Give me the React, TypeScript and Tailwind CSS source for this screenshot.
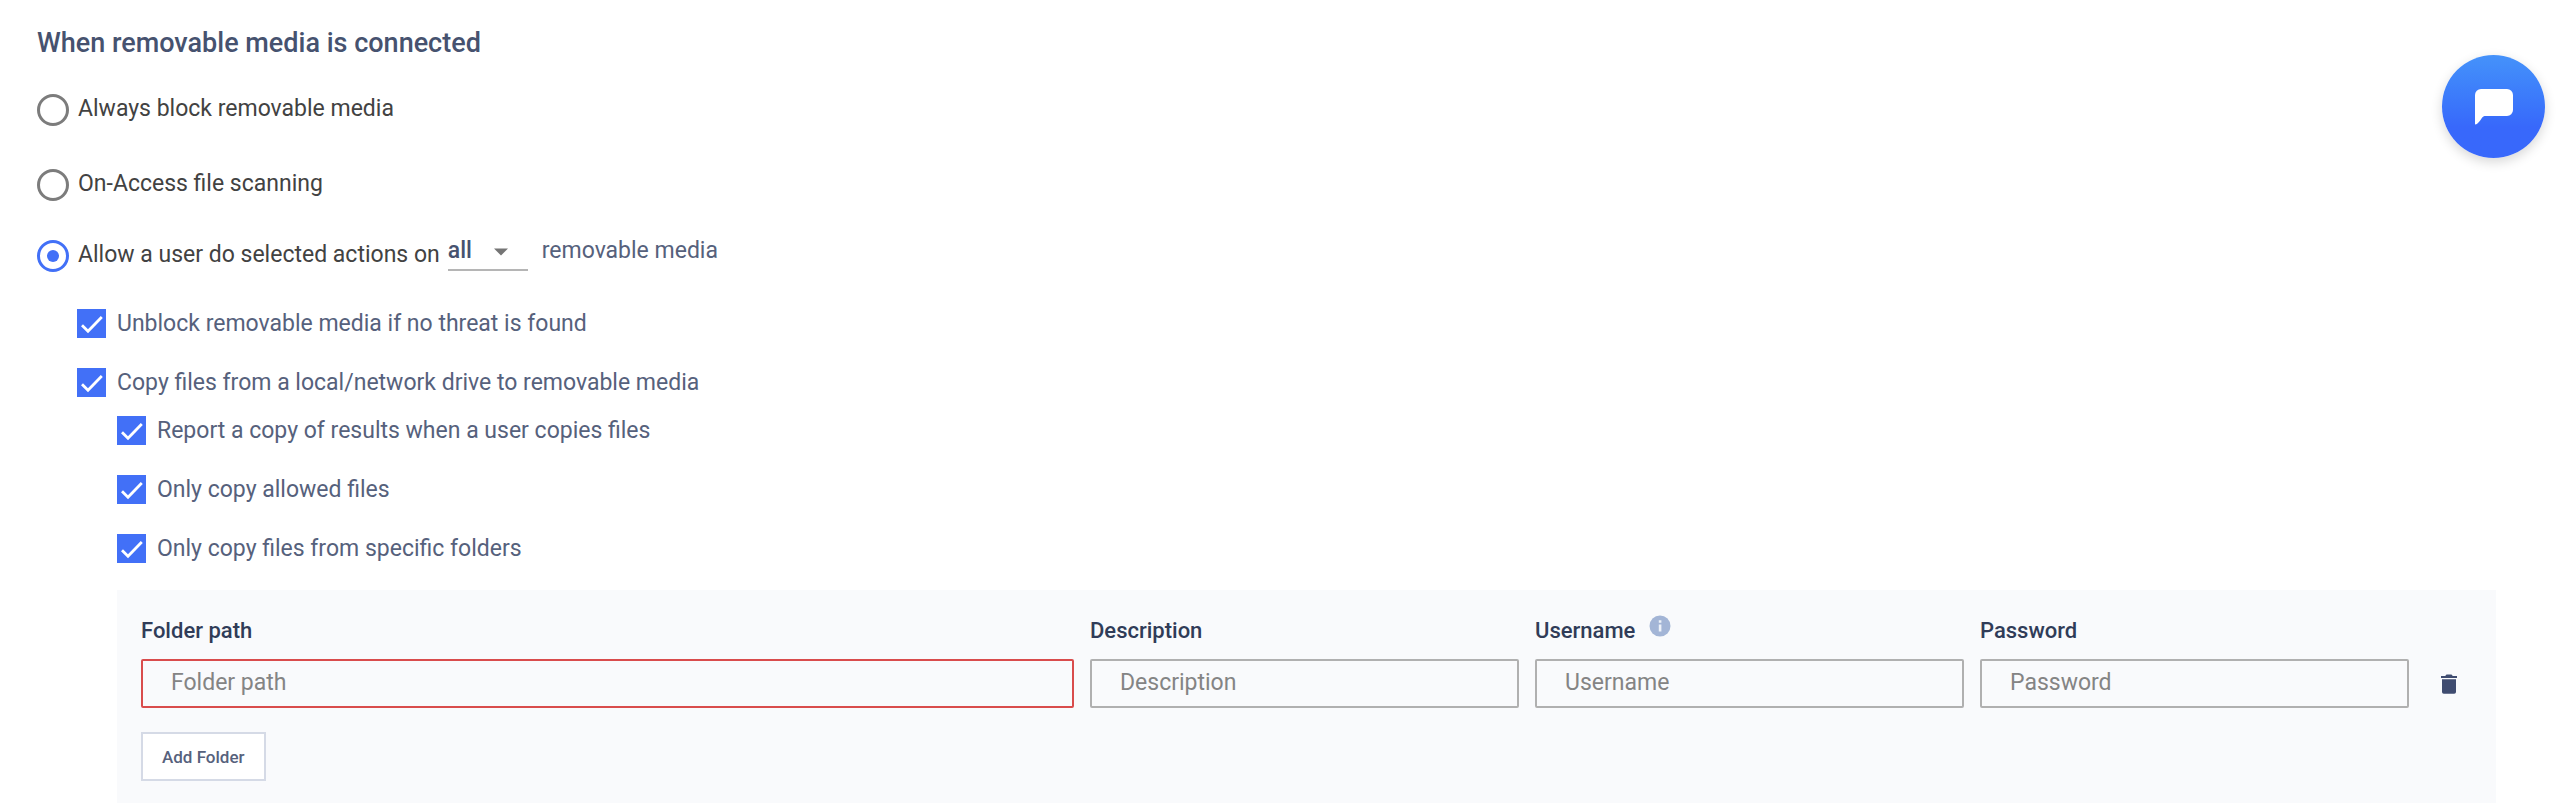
import { useState } from "react";
import type { ReactNode } from "react";
import { clsx } from "clsx";

interface RadioOptionProps {
  label: string;
  value: string;
  selected: string;
  onSelect: (value: string) => void;
}

function RadioOption({ label, value, selected, onSelect }: RadioOptionProps) {
  return (
    <label className="flex w-fit items-center gap-[9px] text-[#424242]">
      <span className="mt-1 grid size-8 place-items-center">
        <input
          type="radio"
          name="media-action"
          value={value}
          checked={selected === value}
          onChange={() => onSelect(value)}
          className="peer col-start-1 row-start-1 size-8 appearance-none rounded-full border-3 border-[#7c7c7c] bg-white checked:border-[#4270f7]"
        />
        <span className="pointer-events-none col-start-1 row-start-1 size-3 rounded-full peer-checked:bg-[#4270f7]" />
      </span>
      <span className="pt-0.5 leading-[30px]">{label}</span>
    </label>
  );
}

function CheckOption({ label }: { label: string }) {
  return (
    <label className="flex w-fit items-center gap-[11px] text-[#56617c]">
      <span className="grid size-[29px] place-items-center">
        <input
          type="checkbox"
          defaultChecked
          className="peer col-start-1 row-start-1 size-[29px] appearance-none border-2 border-[#757575] checked:border-[#4270f7] checked:bg-[#4270f7]"
        />
        <svg
          viewBox="0 0 29 29"
          className="pointer-events-none invisible col-start-1 row-start-1 size-[29px] peer-checked:visible"
        >
          <path d="M5 16.2l6 6L24.8 8" fill="none" stroke="#fff" strokeWidth="2.8" />
        </svg>
      </span>
      <span className="pt-0.5 leading-[30px]">{label}</span>
    </label>
  );
}

interface FieldProps {
  id: string;
  label: string;
  type?: string;
  invalid?: boolean;
  hint?: ReactNode;
}

function Field({ id, label, type = "text", invalid = false, hint }: FieldProps) {
  return (
    <div className="flex min-w-0 flex-col gap-3.5">
      <div className="flex h-7 gap-3.5">
        <label htmlFor={id} className="text-[22px] leading-7 font-medium text-[#303c58]">
          {label}
        </label>
        {hint}
      </div>
      <input
        id={id}
        type={type}
        placeholder={label}
        aria-invalid={invalid}
        className={clsx(
          "h-[49px] w-full rounded-[2px] border-2 bg-transparent px-7 pb-0.5 placeholder:text-[#848484] focus:outline-none",
          invalid ? "border-[#d94c4c]" : "border-[#b0b0b0]"
        )}
      />
    </div>
  );
}

const InfoIcon = () => (
  <svg viewBox="0 0 22 22" className="-mt-0.5 size-[22px]" role="img" aria-label="Info">
    <circle cx="11" cy="11" r="10.5" fill="#a3b5d6" />
    <path d="M9.8 5.3h2.6v2.5H9.8zM9.8 9.6h2.6v6.9H9.8z" fill="#eef2f9" />
  </svg>
);

const TrashIcon = () => (
  <svg viewBox="0 0 16 20" className="h-5 w-4" fill="#3f4c70">
    <path d="M0 2h4.2L5.5.5h5L11.8 2H16v2H0zM1 5.2h14V18a1.8 1.8 0 0 1-1.8 1.8H2.8A1.8 1.8 0 0 1 1 18z" />
  </svg>
);

const ChatIcon = () => (
  <svg viewBox="0 0 38 36" className="h-9 w-[38px]" fill="#fff">
    <path d="M6 0h26a6 6 0 0 1 6 6v15a6 6 0 0 1-6 6H9.5C6.5 27.500 5 34 0.800 35.500Q0 35.700 0 34.500V6a6 6 0 0 1 6-6z" />
  </svg>
);

export default function App() {
  const [action, setAction] = useState("allow");

  return (
    <main className="bg-white pt-[27px] pr-[72px] pb-[7px] pl-[37px] font-['Roboto','Liberation_Sans',sans-serif] text-[23px] leading-8">
      <h2 className="text-[27px] leading-8 font-medium text-[#46526f]">
        When removable media is connected
      </h2>

      <div className="mt-[31px] flex flex-col gap-[39px]">
        <RadioOption
          label="Always block removable media"
          value="block"
          selected={action}
          onSelect={setAction}
        />
        <RadioOption
          label="On-Access file scanning"
          value="scan"
          selected={action}
          onSelect={setAction}
        />
      </div>

      <div className="mt-[31px] flex h-10 items-end">
        <RadioOption
          label="Allow a user do selected actions on"
          value="allow"
          selected={action}
          onSelect={setAction}
        />
        <span className="ml-2 grid h-[39px] w-20 items-center self-start">
          <select
            aria-label="Removable media scope"
            className="col-start-1 row-start-1 h-[39px] w-20 appearance-none border-b-2 border-[#b5b5b5] bg-transparent font-medium text-[#46526f]"
          >
            <option>all</option>
            <option>selected</option>
          </select>
          <svg
            viewBox="0 0 14 7"
            className="pointer-events-none col-start-1 row-start-1 mr-5 h-2 w-3.5 justify-self-end"
            fill="#757575"
          >
            <path d="M0 0h14L7 7z" />
          </svg>
        </span>
        <span className="ml-3.5 self-start leading-[38px] text-[#56617c]">removable media</span>
      </div>

      <div className="mt-[35px] flex flex-col gap-[27px] pl-10">
        <CheckOption label="Unblock removable media if no threat is found" />
        <div className="flex flex-col gap-4">
          <CheckOption label="Copy files from a local/network drive to removable media" />
          <div className="flex flex-col gap-[27px] pl-10">
            <CheckOption label="Report a copy of results when a user copies files" />
            <CheckOption label="Only copy allowed files" />
            <CheckOption label="Only copy files from specific folders" />
          </div>
        </div>
      </div>

      <section className="mt-[26px] ml-20 bg-[#f9fafc] pt-[27px] pb-[22px] pl-6">
        <div className="flex items-end">
          <div className="grid flex-1 grid-cols-[933fr_429fr_429fr_429fr] gap-4">
            <Field id="folder-path" label="Folder path" invalid />
            <Field id="description" label="Description" />
            <Field id="username" label="Username" hint={<InfoIcon />} />
            <Field id="password" label="Password" type="password" />
          </div>
          <button
            type="button"
            aria-label="Delete folder"
            className="grid h-[49px] w-[87px] place-items-center pr-[7px]"
          >
            <TrashIcon />
          </button>
        </div>
        <button
          type="button"
          className="mt-6 h-[49px] border-2 border-[#d5dae6] bg-white px-[19px] text-[17px] font-medium text-[#56617c]"
        >
          Add Folder
        </button>
      </section>

      <button
        type="button"
        aria-label="Open chat"
        className="fixed top-[55px] right-[23px] grid size-[103px] place-items-center rounded-full bg-linear-to-b from-[#4592fa] to-[#3868fb] to-70% shadow-[0_4px_12px_rgba(0,0,0,0.16)]"
      >
        <ChatIcon />
      </button>
    </main>
  );
}
